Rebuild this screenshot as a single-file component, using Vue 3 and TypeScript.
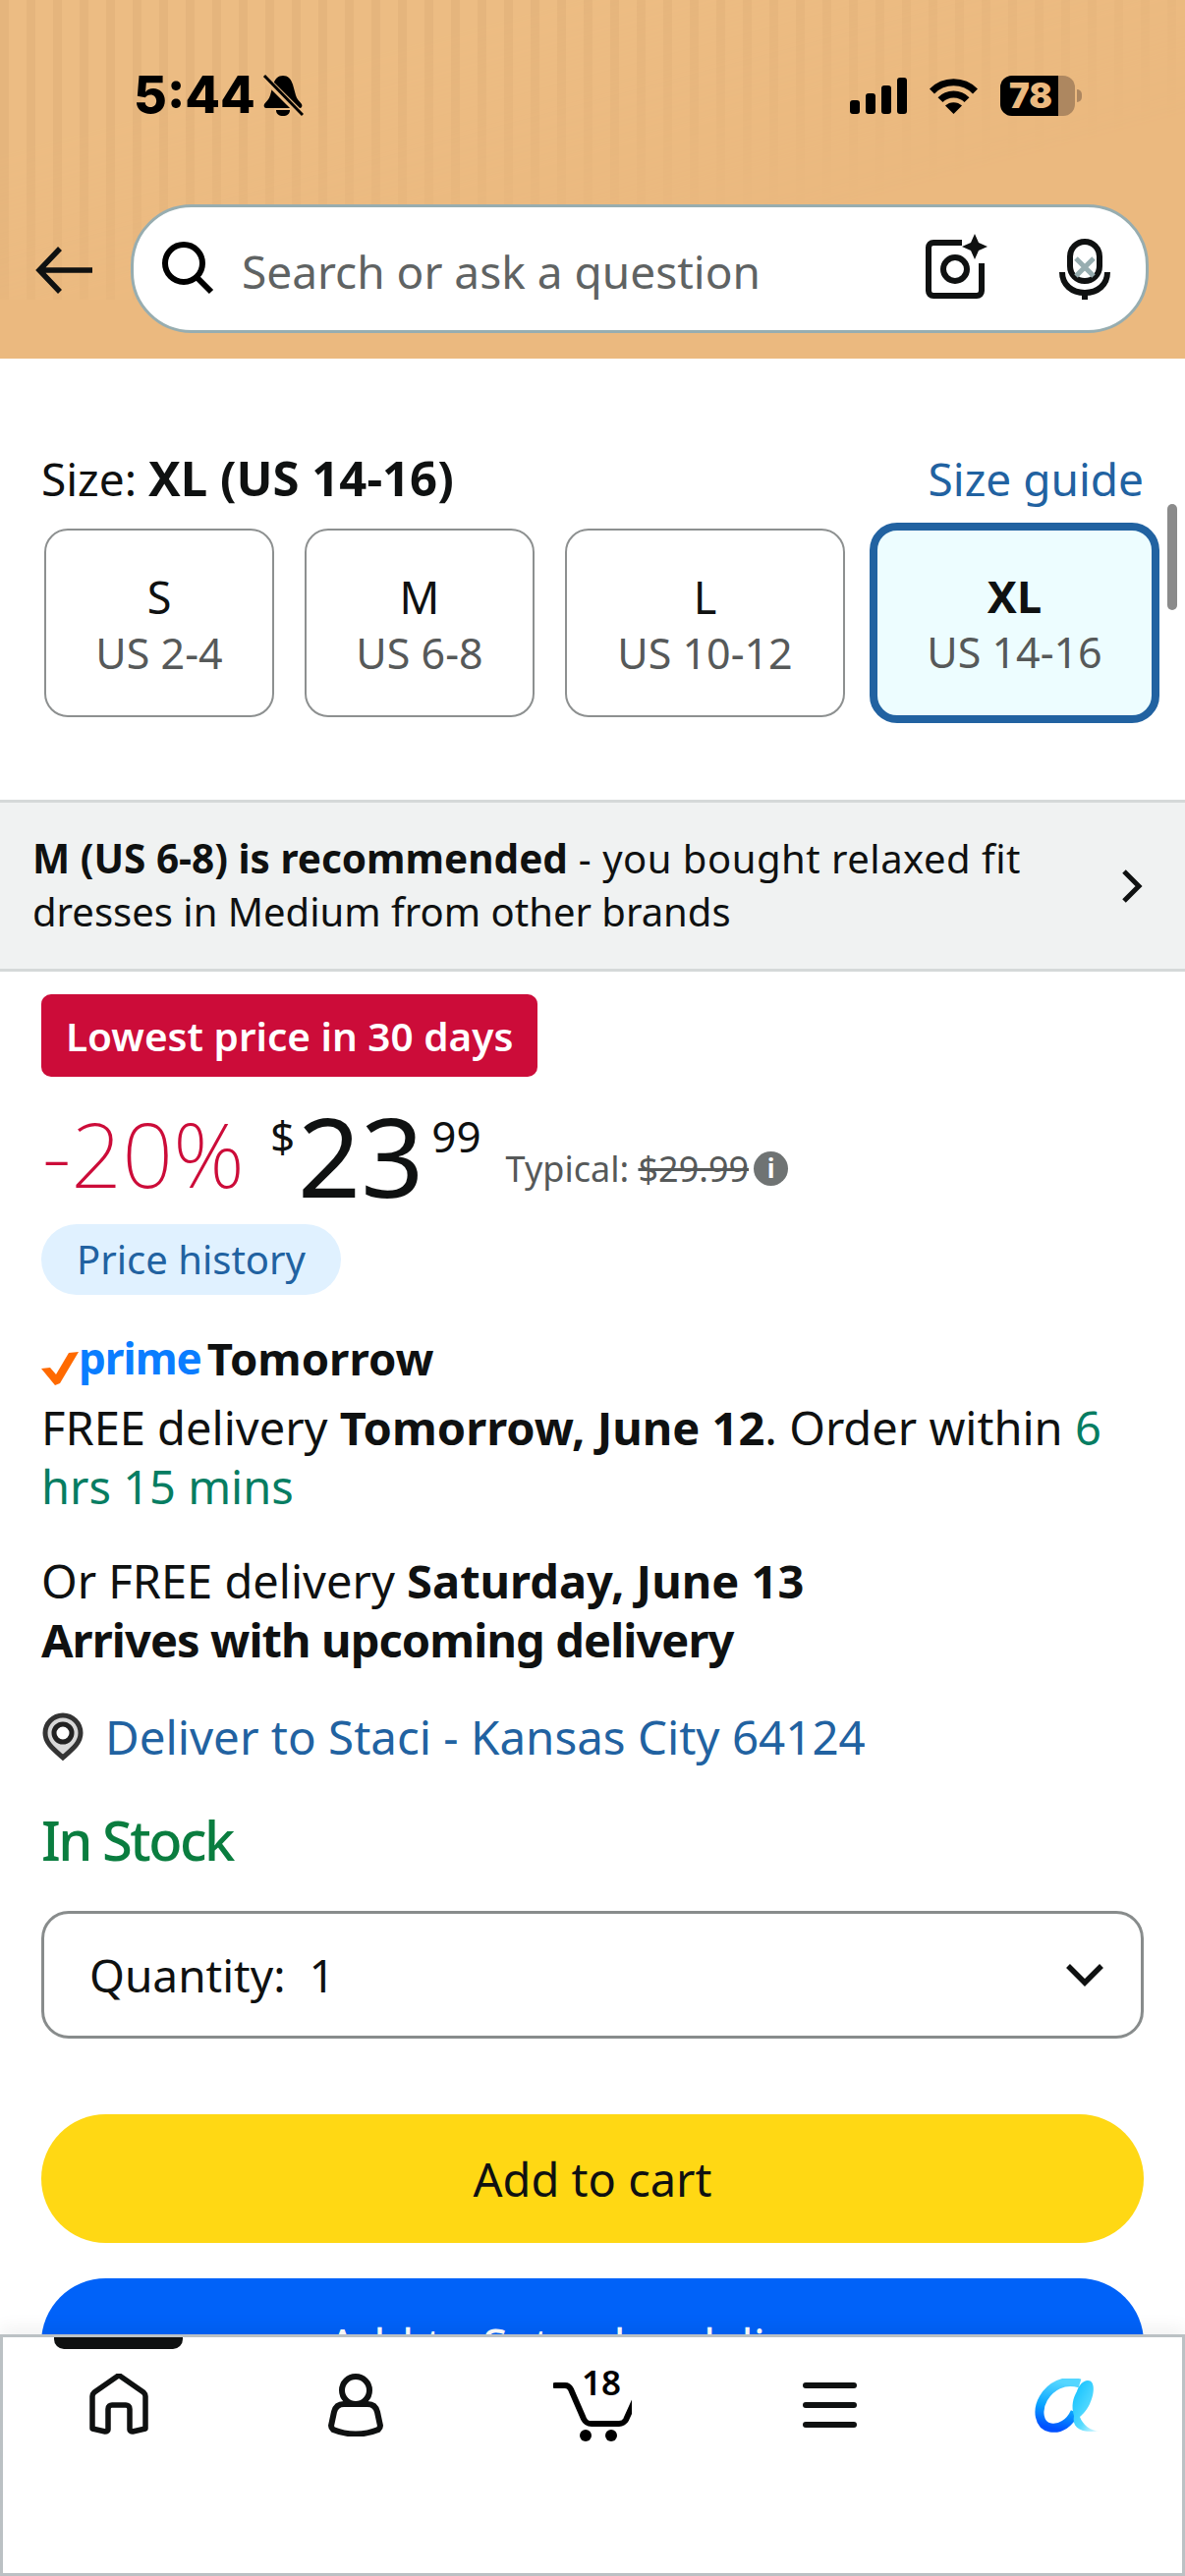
<script setup lang="ts">
import { ref } from 'vue'

interface SizeOption {
  label: string
  range: string
  width: number
}

const sizes: SizeOption[] = [
  { label: 'S', range: 'US 2-4', width: 234 },
  { label: 'M', range: 'US 6-8', width: 234 },
  { label: 'L', range: 'US 10-12', width: 285 },
  { label: 'XL', range: 'US 14-16', width: 295 },
]

const selected = ref('XL')
</script>

<template>
  <div class="page">
    <header class="top">
      <div class="status">
        <div class="clock">
          <span class="time">5:44</span>
          <svg class="bell" viewBox="0 0 42 44" width="42" height="44">
            <path d="M21 2c5 0 8 3 10 9l3 11c1 4 4 6 6 9 1 2 0 4-2 4H4c-2 0-3-2-2-4 2-3 5-5 6-9l3-11c2-6 5-9 10-9z" fill="#000" />
            <path d="M14 37h14c0 4-3 6-7 6s-7-2-7-6z" fill="#000" />
            <path d="M1 3l40 40" stroke="#ebba80" stroke-width="7" />
            <path d="M2 2l39 40" stroke="#000" stroke-width="3" />
          </svg>
        </div>
        <div class="indicators">
          <div class="signal">
            <i style="height: 14px"></i>
            <i style="height: 21px"></i>
            <i style="height: 29px"></i>
            <i style="height: 37px"></i>
          </div>
          <svg viewBox="0 0 51 37" width="51" height="37">
            <path d="M3.5 14A31 31 0 0 1 47.5 14" fill="none" stroke="#000" stroke-width="7" />
            <path d="M12 22.6A19 19 0 0 1 39 22.6" fill="none" stroke="#000" stroke-width="7" />
            <path d="M25.5 37L17 28.5A12.5 12.5 0 0 1 34 28.5Z" fill="#000" />
          </svg>
          <div class="battery">
            <div class="battery-body">
              <div class="battery-fill">78</div>
            </div>
            <div class="battery-nub"></div>
          </div>
        </div>
      </div>

      <div class="search-row">
        <svg class="back" viewBox="0 0 60 48" width="60" height="48">
          <path d="M58 24H5M25 2L4 24l21 22" fill="none" stroke="#0f1111" stroke-width="5.5" />
        </svg>
        <div class="search">
          <svg viewBox="0 0 56 56" width="56" height="56">
            <circle cx="23" cy="22" r="19" fill="none" stroke="#000" stroke-width="6" />
            <path d="M36 36l15 15" stroke="#000" stroke-width="6" />
          </svg>
          <span class="placeholder">Search or ask a question</span>
          <svg class="camera" viewBox="0 0 66 66" width="66" height="66">
            <path d="M39 9H10c-3 0-5 2-5 5v44c0 3 2 5 5 5h44c3 0 5-2 5-5V30" fill="none" stroke="#0f1111" stroke-width="6" />
            <circle cx="32" cy="36" r="12" fill="none" stroke="#0f1111" stroke-width="6" />
            <path d="M52 0l4 9 9 4-9 4-4 9-4-9-9-4 9-4z" fill="#0f1111" />
          </svg>
          <svg class="mic" viewBox="0 0 52 62" width="52" height="62">
            <rect x="11" y="3" width="30" height="40" rx="15" fill="none" stroke="#0f1111" stroke-width="6" />
            <path d="M3 34c0 13 10 21 23 21s23-8 23-21" fill="none" stroke="#0f1111" stroke-width="6" />
            <path d="M26 54v8" stroke="#0f1111" stroke-width="6" />
            <path d="M17 20l18 18M35 20L17 38" stroke="#97adb0" stroke-width="5" />
          </svg>
        </div>
      </div>
    </header>

    <main class="content">
      <section class="size-section">
        <div class="size-head">
          <span>Size: <b>XL (US 14-16)</b></span>
          <a class="link">Size guide</a>
        </div>
        <div class="size-list">
          <button
            v-for="size in sizes"
            :key="size.label"
            class="size-card"
            :class="{ active: selected === size.label }"
            :style="{ width: size.width + 'px' }"
            @click="selected = size.label"
          >
            <span class="size-label">{{ size.label }}</span>
            <span class="size-range">{{ size.range }}</span>
          </button>
        </div>
        <div class="scroll-thumb"></div>
      </section>

      <section class="recommend">
        <p><b>M (US 6-8) is recommended</b><span class="wide"> - you bought relaxed fit</span><br />dresses in Medium from other brands</p>
        <svg viewBox="0 0 24 36" width="24" height="36">
          <path d="M4 3l15 15L4 33" fill="none" stroke="#0f1111" stroke-width="5" />
        </svg>
      </section>

      <section class="details">
        <div class="deal-badge">Lowest price in 30 days</div>

        <div class="price-row">
          <span class="discount">-20%</span>
          <span class="price">
            <sup class="currency">$</sup><span class="whole">23</span><sup class="cents">99</sup>
          </span>
          <span class="typical">Typical: <s>$29.99</s></span>
          <span class="info">i</span>
        </div>

        <div class="history">Price history</div>

        <div class="prime-row">
          <svg viewBox="0 0 38 34" width="38" height="34">
            <path d="M0 17l9-1 6 7L28 1l10-1-19 32-5 2z" fill="#ff6a00" />
          </svg>
          <span class="prime">prime</span>
          <b class="prime-day">Tomorrow</b>
        </div>

        <p class="delivery">FREE delivery <b>Tomorrow, June 12</b>. Order within <span class="countdown">6 hrs 15 mins</span></p>
        <p class="delivery alt">Or FREE delivery <b>Saturday, June 13</b><br /><b class="tight">Arrives with upcoming delivery</b></p>

        <div class="deliver-to">
          <svg viewBox="0 0 44 50" width="44" height="50">
            <path d="M22 46C12 37 4 31 4 21a18 18 0 0 1 36 0c0 10-8 16-18 25z" fill="#d8d8d8" stroke="#333" stroke-width="5" />
            <circle cx="22" cy="21" r="9" fill="#fff" stroke="#222" stroke-width="5" />
          </svg>
          <a class="link">Deliver to Staci - Kansas City 64124</a>
        </div>

        <div class="stock">In Stock</div>

        <div class="quantity">
          <span>Quantity:&nbsp; 1</span>
          <svg viewBox="0 0 40 24" width="40" height="24">
            <path d="M3 3l17 17L37 3" fill="none" stroke="#0f1111" stroke-width="5.5" />
          </svg>
        </div>

        <button class="action cart">Add to cart</button>
        <button class="action saturday">Add to Saturday delivery</button>
      </section>
    </main>

    <nav class="tabs">
      <div class="tab-marker"></div>
      <svg class="tab home" viewBox="0 0 62 62" width="62" height="62">
        <path d="M4 56V23c0-2 1-3 2-4L29 3c1-1 3-1 4 0l23 16c1 1 2 2 2 4v33l-13 3c-2 0-3-1-3-2V36c0-3-2-4-4-4h-14c-2 0-4 1-4 4v21c0 1-1 2-3 2z" fill="none" stroke="#0f1111" stroke-width="5.5" stroke-linejoin="round" />
      </svg>
      <svg class="tab person" viewBox="0 0 56 64" width="56" height="64">
        <circle cx="28" cy="17" r="14" fill="none" stroke="#0f1111" stroke-width="6" />
        <path d="M16 31h24c6 0 9 4 10 8l3 14c0 2-1 3-2 4-14 6-32 6-46 0-1-1-2-2-2-4l3-14c1-4 4-8 10-8z" fill="none" stroke="#0f1111" stroke-width="6" />
      </svg>
      <div class="tab basket">
        <svg viewBox="0 0 80 70" width="80" height="70">
          <path d="M2 12h10c3 0 5 2 6 4l13 30c2 4 4 5 8 5h28c3 0 6-2 7-4l10-22" fill="none" stroke="#000" stroke-width="6" stroke-linecap="round" />
          <circle cx="33" cy="63" r="6" />
          <circle cx="59" cy="63" r="6" />
        </svg>
        <span class="basket-count">18</span>
      </div>
      <div class="tab menu"><i></i><i></i><i></i></div>
      <svg class="tab assistant" viewBox="0 0 68 56" width="68" height="56">
        <defs>
          <linearGradient id="ringStroke" x1="0.5" y1="0" x2="0.3" y2="1">
            <stop offset="0" stop-color="#55d6ff" />
            <stop offset="0.55" stop-color="#0aa6ff" />
            <stop offset="1" stop-color="#0051ff" />
          </linearGradient>
          <linearGradient id="tailStroke" x1="0" y1="0" x2="1" y2="1">
            <stop offset="0" stop-color="#08bcff" />
            <stop offset="0.6" stop-color="#58dcff" />
            <stop offset="1" stop-color="#ffffff" />
          </linearGradient>
        </defs>
        <path d="M46 5C30 0 16 8 9 20 2 32 4 48 16 50c10 2 20-5 25-16" fill="none" stroke="url(#ringStroke)" stroke-width="9" />
        <path d="M54 2c8 0 7 14 2 24-3 7-10 13-10 13 3 8 10 14 21 15H58C44 54 38 48 40 38c-3-10-1-18 3-25 2-6 6-11 11-11z" fill="url(#tailStroke)" />
      </svg>
    </nav>
  </div>
</template>

<style>
body {
  margin: 0;
  background: #fff;
}
</style>

<style scoped>
.page {
  position: relative;
  width: 1206px;
  height: 2622px;
  overflow: hidden;
  background: #fff;
  color: #0f1111;
  font-family: "Noto Sans", "Open Sans", Arial, sans-serif;
}

.top {
  position: relative;
  height: 365px;
  box-sizing: border-box;
  padding-top: 67px;
  background: #ebb97f;
}
.top::before {
  content: "";
  position: absolute;
  inset: 0 0 60px;
  background: repeating-linear-gradient(90deg, #e5b57d 0 9px, #ecbc83 9px 27px);
  -webkit-mask-image: linear-gradient(165deg, #000 25%, transparent 70%);
  mask-image: linear-gradient(165deg, #000 25%, transparent 70%);
}

.status {
  position: relative;
  display: flex;
  justify-content: space-between;
  align-items: center;
  height: 60px;
  padding: 0 105px 0 136px;
}
.clock {
  display: flex;
  align-items: center;
  gap: 7px;
}
.time {
  font-family: Inter, "Liberation Sans", sans-serif;
  font-size: 52px;
  font-weight: 800;
  line-height: 60px;
  color: #000;
}
.indicators {
  display: flex;
  align-items: center;
  gap: 22px;
}
.signal {
  display: flex;
  align-items: flex-end;
  gap: 6px;
  height: 37px;
}
.signal i {
  display: block;
  width: 10px;
  border-radius: 3px;
  background: #000;
}
.battery {
  display: flex;
  align-items: center;
  gap: 2px;
}
.battery-body {
  width: 76px;
  height: 41px;
  border-radius: 12px;
  overflow: hidden;
  background: #ad8760;
}
.battery-fill {
  width: 59px;
  height: 41px;
  padding-left: 9px;
  box-sizing: border-box;
  background: #000;
  color: #ebb97f;
  font-family: Inter, "Liberation Sans", sans-serif;
  font-size: 35px;
  font-weight: 900;
  line-height: 41px;
}
.battery-nub {
  width: 5px;
  height: 13px;
  border-radius: 0 6px 6px 0;
  background: #ad8760;
}

.search-row {
  position: relative;
  display: flex;
  align-items: center;
  margin-top: 81px;
  padding-left: 36px;
}
.back {
  flex: none;
  margin: 2px 37px 0 0;
}
.search {
  display: flex;
  align-items: center;
  width: 1036px;
  height: 131px;
  box-sizing: border-box;
  padding: 0 36px 0 28px;
  border: 3px solid #97adb0;
  border-radius: 62px;
  background: #fff;
}
.placeholder {
  flex: 1;
  margin: 5px 0 0 26px;
  font-size: 46px;
  color: #5f6363;
  white-space: nowrap;
}
.camera {
  margin: -6px 72px 0 0;
}

.size-section {
  position: relative;
  height: 449px;
  box-sizing: border-box;
  padding: 88px 42px 0;
}
.size-head {
  display: flex;
  justify-content: space-between;
  align-items: baseline;
  height: 66px;
  font-size: 46px;
  line-height: 66px;
}
.size-head b {
  font-size: 49px;
}
.link {
  color: #2162a1;
}
.size-list {
  display: flex;
  align-items: center;
  margin: 13px 0 0 3px;
  gap: 31px;
}
.size-card {
  display: flex;
  flex: none;
  flex-direction: column;
  align-items: center;
  height: 192px;
  box-sizing: border-box;
  padding: 40px 0 0;
  border: 2.5px solid #8d9090;
  border-radius: 24px;
  background: #fff;
  color: #0f1111;
  font-family: inherit;
}
.size-label {
  font-size: 45px;
  line-height: 56px;
}
.size-range {
  margin-top: 3px;
  font-size: 43px;
  line-height: 52px;
  color: #565959;
}
.size-card.active {
  height: 204px;
  margin-left: -6px;
  padding-top: 39px;
  border: 8px solid #2162a1;
  border-radius: 28px;
  background: #edfdff;
}
.size-card.active .size-label {
  font-weight: 700;
}
.scroll-thumb {
  position: absolute;
  top: 148px;
  right: 8px;
  width: 10px;
  height: 108px;
  border-radius: 5px;
  background: #8b8b8b;
}

.recommend {
  display: flex;
  justify-content: space-between;
  align-items: center;
  height: 175px;
  box-sizing: border-box;
  padding: 0 42px 0 33px;
  border-top: 3px solid #d5d9d9;
  border-bottom: 3px solid #d5d9d9;
  background: #f0f2f2;
}
.recommend p {
  width: 1050px;
  margin: -2px 0 0;
  font-size: 40px;
  line-height: 54px;
}
.recommend b {
  font-size: 40.5px;
}
.wide {
  letter-spacing: 0.5px;
}

.details {
  padding: 23px 42px 0;
}
.deal-badge {
  display: inline-block;
  height: 84px;
  padding: 0 25px;
  border-radius: 10px;
  background: #cc0c39;
  color: #fff;
  font-size: 40.5px;
  font-weight: 600;
  line-height: 86px;
}
.price-row {
  display: flex;
  align-items: flex-start;
  height: 150px;
}
.discount {
  margin: 22px 0 0 1px;
  font-size: 91px;
  font-weight: 200;
  line-height: 112px;
  color: #cc0c39;
}
.price {
  display: flex;
  align-items: flex-start;
  margin-left: 26px;
}
.currency {
  margin-top: 32px;
  font-size: 44px;
  line-height: 56px;
}
.whole {
  margin: 5px 8px 0 3px;
  font-size: 112px;
  line-height: 150px;
}
.cents {
  margin-top: 30px;
  font-size: 44px;
  line-height: 60px;
}
.typical {
  margin: 70px 0 0 25px;
  font-size: 36px;
  line-height: 48px;
  color: #565959;
}
.info {
  width: 35px;
  height: 35px;
  margin: 76px 0 0 5px;
  border-radius: 50%;
  background: #6f7373;
  color: #fff;
  font-size: 26px;
  font-weight: 700;
  line-height: 35px;
  text-align: center;
}
.history {
  display: inline-block;
  height: 72px;
  padding: 0 36px;
  border-radius: 36px;
  background: #e0f1ff;
  color: #2162a1;
  font-size: 40px;
  line-height: 72px;
}
.prime-row {
  display: flex;
  align-items: flex-end;
  height: 64px;
  margin-top: 30px;
}
.prime {
  color: #0a7dff;
  font-size: 44px;
  font-weight: 700;
  line-height: 60px;
  letter-spacing: -1px;
}
.prime-day {
  margin-left: 6px;
  font-size: 45.5px;
  line-height: 60px;
}
.prime-row svg {
  margin-bottom: 2px;
}
.delivery {
  margin: 11px 0 0;
  font-size: 47px;
  line-height: 60px;
}
.delivery.alt {
  margin-top: 36px;
}
.tight {
  letter-spacing: -0.9px;
}
.countdown {
  color: #067d62;
}
.deliver-to {
  display: flex;
  align-items: center;
  gap: 21px;
  margin-top: 39px;
  font-size: 47.5px;
  line-height: 60px;
}
.stock {
  margin-top: 38px;
  font-size: 56px;
  font-weight: 500;
  line-height: 72px;
  letter-spacing: -2.5px;
  color: #0a7d3f;
}
.quantity {
  display: flex;
  justify-content: space-between;
  align-items: center;
  height: 130px;
  box-sizing: border-box;
  margin-top: 37px;
  padding: 0 37px 0 46px;
  border: 3px solid #888c8c;
  border-radius: 28px;
  font-size: 46px;
}
.action {
  display: block;
  width: 100%;
  height: 131px;
  border: none;
  border-radius: 66px;
  color: #0f1111;
  font-family: inherit;
  font-size: 47px;
}
.cart {
  margin-top: 77px;
  background: #ffd814;
}
.saturday {
  margin-top: 36px;
  padding-top: 6px;
  background: #0062f9;
  color: #fff;
}

.tabs {
  position: absolute;
  left: 0;
  right: 0;
  bottom: 0;
  height: 246px;
  box-sizing: border-box;
  border: 3px solid #bbc1c4;
  background: #fff;
  box-shadow: 0 -8px 16px rgba(0, 0, 0, 0.05);
}
.tab-marker {
  position: absolute;
  top: 0;
  left: 52px;
  width: 131px;
  height: 12px;
  border-radius: 0 0 10px 10px;
  background: #0f1111;
}
.tab {
  position: absolute;
}
.home {
  left: 87px;
  top: 37px;
}
.person {
  left: 331px;
  top: 37px;
}
.basket {
  left: 560px;
  top: 37px;
  width: 80px;
  height: 70px;
}
.basket svg {
  display: block;
}
.basket-count {
  position: absolute;
  left: 29px;
  top: -11px;
  font-size: 35px;
  font-weight: 600;
  line-height: 40px;
  color: #000;
}
.menu {
  left: 814px;
  top: 46px;
  display: flex;
  flex-direction: column;
  gap: 14px;
  width: 55px;
}
.menu i {
  display: block;
  height: 6px;
  border-radius: 3px;
  background: #0f1111;
}
.assistant {
  left: 1050px;
  top: 42px;
}
</style>
